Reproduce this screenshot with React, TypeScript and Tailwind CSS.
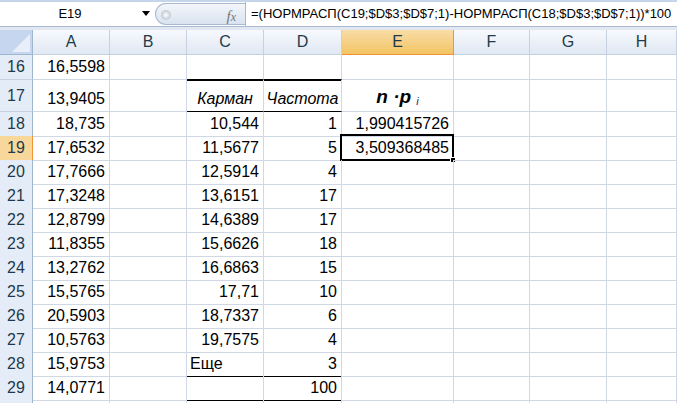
import React from 'react';

type Row = {
  n: number;
  h: string;
  a?: string;
  c?: string;
  d?: string;
  e?: string;
  cAlign?: 'left' | 'center' | 'right';
  head?: boolean;
  hideNum?: boolean;
  cls?: { c?: string; d?: string };
};

const GRID = 'grid grid-cols-[33px_77px_77px_77px_78px_112px_76px_77px_1fr]';
const FONT = { fontFamily: '"Liberation Sans", Arial, sans-serif' };

const rows: Row[] = [
  { n: 16, h: 'h-[25px]', a: '16,5598', cls: { c: 'border-b-black', d: 'border-b-black' } },
  { n: 17, h: 'h-[32px]', a: '13,9405', c: 'Карман', d: 'Частота', head: true,
    cls: { c: 'border-b-black shadow-[inset_0_1px_0_#000]', d: 'border-b-black shadow-[inset_0_1px_0_#000]' } },
  { n: 18, h: 'h-[24px]', a: '18,735', c: '10,544', d: '1', e: '1,990415726' },
  { n: 19, h: 'h-[24px]', a: '17,6532', c: '11,5677', d: '5', e: '3,509368485' },
  { n: 20, h: 'h-[24px]', a: '17,7666', c: '12,5914', d: '4' },
  { n: 21, h: 'h-[24px]', a: '17,3248', c: '13,6151', d: '17' },
  { n: 22, h: 'h-[24px]', a: '12,8799', c: '14,6389', d: '17' },
  { n: 23, h: 'h-[24px]', a: '11,8355', c: '15,6626', d: '18' },
  { n: 24, h: 'h-[24px]', a: '13,2762', c: '16,6863', d: '15' },
  { n: 25, h: 'h-[24px]', a: '15,5765', c: '17,71', d: '10' },
  { n: 26, h: 'h-[24px]', a: '20,5903', c: '18,7337', d: '6' },
  { n: 27, h: 'h-[24px]', a: '10,5763', c: '19,7575', d: '4' },
  { n: 28, h: 'h-[24px]', a: '15,9753', c: 'Еще', d: '3', cAlign: 'left',
    cls: { c: 'border-b-black', d: 'border-b-black' } },
  { n: 29, h: 'h-[24px]', a: '14,0771', c: '', d: '100',
    cls: { c: 'border-b-black shadow-[inset_0_1px_0_#000]', d: 'border-b-black shadow-[inset_0_1px_0_#000]' } },
  { n: 30, h: 'h-[24px]', hideNum: true,
    cls: { c: 'shadow-[inset_0_1px_0_#000]', d: 'shadow-[inset_0_1px_0_#000]' } },
];

const Cell = ({ text, align = 'right', className = '', children }: {
  text?: string; align?: 'left' | 'center' | 'right'; className?: string; children?: React.ReactNode;
}) => (
  <div
    className={`relative flex items-end pb-[3px] border-r border-b border-[#d0d7e5] text-[16px] leading-[18px] text-black whitespace-nowrap
      ${align === 'right' ? 'justify-end pr-[4px]' : align === 'center' ? 'justify-center' : 'justify-start pl-[3px]'} ${className}`}
  >
    {text}
    {children}
  </div>
);

const FormulaBar = () => (
  <div className="h-[30px] flex flex-col">
    <div className="h-[2px] bg-[#c5d5ea]" />
    <div className="h-[24px] flex bg-white">
      <div className="w-[155px] flex items-center relative">
        <span className="w-[140px] text-center text-[13px] text-black">E19</span>
        <span className="absolute left-[142px] top-[9px] w-0 h-0 border-l-[4px] border-r-[4px] border-t-[5px] border-l-transparent border-r-transparent border-t-black" />
      </div>
      <div className="w-[90px] my-[1px] relative flex items-center rounded-l-full border border-[#a7b8cf] border-r-0 bg-linear-to-b from-[#f3f6fb] to-[#d9e3f0]">
        <span className="absolute left-[5px] top-[6px] w-[10px] h-[10px] rounded-full bg-radial from-[#ffffff] to-[#a9b3c0]" />
        <span
          className="absolute right-[9px] top-[1px] text-[15px] italic text-[#777]"
          style={{ fontFamily: '"Liberation Serif", serif' }}
        >
          f<span className="text-[12px]">x</span>
        </span>
      </div>
      <div className="flex-1 flex items-center pl-[5px] border-l border-[#a7b8cf] text-[13px] text-black whitespace-nowrap overflow-hidden">
        =(НОРМРАСП(C19;$D$3;$D$7;1)-НОРМРАСП(C18;$D$3;$D$7;1))*100
      </div>
    </div>
    <div className="h-[1px] bg-[#a9bad0]" />
    <div className="h-[3px] bg-[#e1e8f2]" />
  </div>
);

const ColHeader = () => {
  const letters = ['A', 'B', 'C', 'D', 'E', 'F', 'G', 'H'];
  return (
    <div className={`${GRID} h-[25px]`}>
      <div className="relative border-r border-b border-[#9eb6ce] bg-[#c6d6ee] overflow-hidden">
        <svg className="absolute right-[2px] bottom-[2px]" width="18" height="18" viewBox="0 0 18 18">
          <polygon points="18,0 18,18 0,18" fill="#e8eff9" />
        </svg>
      </div>
      {letters.map(l => (
        <div
          key={l}
          className={`flex items-center justify-center text-[16px] border-r border-b ${
            l === 'E'
              ? 'bg-linear-to-b from-[#f9dca5] to-[#f2c462] border-[#f29436] text-[#1f3a4a]'
              : 'bg-linear-to-b from-[#f7f9fd] to-[#e0e8f3] border-[#c5d1e1] text-[#1f3a4a]'
          }`}
        >
          {l}
        </div>
      ))}
    </div>
  );
};

export default function App() {
  return (
    <div className="w-[677px] h-[403px] overflow-hidden bg-white" style={FONT}>
      <FormulaBar />
      <ColHeader />
      {rows.map(r => (
        <div key={r.n} className={`${GRID} ${r.h}`}>
          <div
            className={`flex items-center justify-center text-[16px] border-b border-r ${
              r.n === 19
                ? 'bg-[#f8d79b] border-r-[#f29436] border-b-[#e8b060] text-[#1f3a4a]'
                : 'bg-[#e4ecf7] border-b-[#c5d1e1] border-r-[#9eb6ce] text-[#1f3a4a]'
            }`}
          >
            {r.hideNum ? '' : r.n}
          </div>
          <Cell text={r.a} />
          <Cell />
          <Cell
            text={r.c}
            align={r.head ? 'center' : r.cAlign ?? 'right'}
            className={`${r.head ? 'italic' : ''} ${r.cls?.c ?? ''}`}
          />
          <Cell text={r.d} align={r.head ? 'center' : 'right'} className={`${r.head ? 'italic' : ''} ${r.cls?.d ?? ''}`} />
          {r.head ? (
            <Cell align="center" className="pb-[4px]">
              <span className="font-bold italic text-[19px] leading-[20px]">n ·p</span>
              <span className="italic text-[11px] ml-[5px] -mb-[3px] text-[#1f2a5a]">i</span>
            </Cell>
          ) : (
            <Cell text={r.e}>
              {r.n === 19 && (
                <>
                  <span className="absolute -left-[2px] -top-[2px] -right-[1px] -bottom-[1px] border-2 border-black pointer-events-none" />
                  <span className="absolute -right-[3px] -bottom-[3px] w-[6px] h-[6px] bg-black border border-white" />
                </>
              )}
            </Cell>
          )}
          <Cell />
          <Cell />
          <Cell />
        </div>
      ))}
    </div>
  );
}
